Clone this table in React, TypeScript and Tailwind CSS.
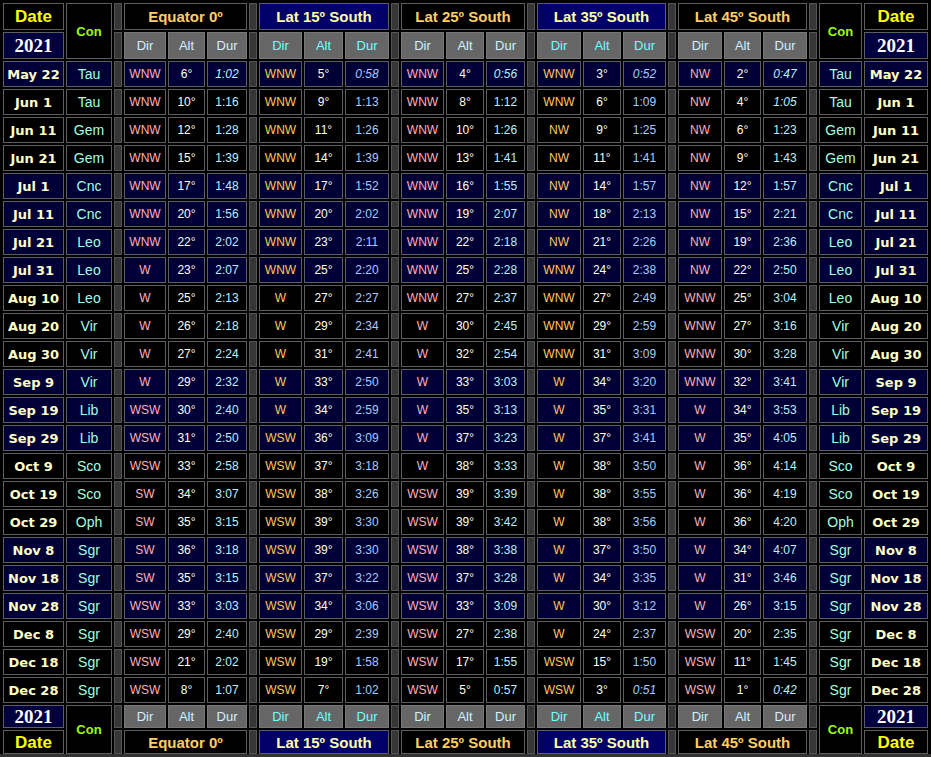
const groups = [
  { name: "Equator 0º", hi: false },
  { name: "Lat 15º South", hi: true },
  { name: "Lat 25º South", hi: false },
  { name: "Lat 35º South", hi: true },
  { name: "Lat 45º South", hi: false },
];

// date, con, then "dir alt dur" per latitude; trailing i = italic duration
const rows: string[][] = [
  ["May 22", "Tau", "WNW 6 1:02i", "WNW 5 0:58i", "WNW 4 0:56i", "WNW 3 0:52i", "NW 2 0:47i"],
  ["Jun 1", "Tau", "WNW 10 1:16", "WNW 9 1:13", "WNW 8 1:12", "WNW 6 1:09", "NW 4 1:05i"],
  ["Jun 11", "Gem", "WNW 12 1:28", "WNW 11 1:26", "WNW 10 1:26", "NW 9 1:25", "NW 6 1:23"],
  ["Jun 21", "Gem", "WNW 15 1:39", "WNW 14 1:39", "WNW 13 1:41", "NW 11 1:41", "NW 9 1:43"],
  ["Jul 1", "Cnc", "WNW 17 1:48", "WNW 17 1:52", "WNW 16 1:55", "NW 14 1:57", "NW 12 1:57"],
  ["Jul 11", "Cnc", "WNW 20 1:56", "WNW 20 2:02", "WNW 19 2:07", "NW 18 2:13", "NW 15 2:21"],
  ["Jul 21", "Leo", "WNW 22 2:02", "WNW 23 2:11", "WNW 22 2:18", "NW 21 2:26", "NW 19 2:36"],
  ["Jul 31", "Leo", "W 23 2:07", "WNW 25 2:20", "WNW 25 2:28", "WNW 24 2:38", "NW 22 2:50"],
  ["Aug 10", "Leo", "W 25 2:13", "W 27 2:27", "WNW 27 2:37", "WNW 27 2:49", "WNW 25 3:04"],
  ["Aug 20", "Vir", "W 26 2:18", "W 29 2:34", "W 30 2:45", "WNW 29 2:59", "WNW 27 3:16"],
  ["Aug 30", "Vir", "W 27 2:24", "W 31 2:41", "W 32 2:54", "WNW 31 3:09", "WNW 30 3:28"],
  ["Sep 9", "Vir", "W 29 2:32", "W 33 2:50", "W 33 3:03", "W 34 3:20", "WNW 32 3:41"],
  ["Sep 19", "Lib", "WSW 30 2:40", "W 34 2:59", "W 35 3:13", "W 35 3:31", "W 34 3:53"],
  ["Sep 29", "Lib", "WSW 31 2:50", "WSW 36 3:09", "W 37 3:23", "W 37 3:41", "W 35 4:05"],
  ["Oct 9", "Sco", "WSW 33 2:58", "WSW 37 3:18", "W 38 3:33", "W 38 3:50", "W 36 4:14"],
  ["Oct 19", "Sco", "SW 34 3:07", "WSW 38 3:26", "WSW 39 3:39", "W 38 3:55", "W 36 4:19"],
  ["Oct 29", "Oph", "SW 35 3:15", "WSW 39 3:30", "WSW 39 3:42", "W 38 3:56", "W 36 4:20"],
  ["Nov 8", "Sgr", "SW 36 3:18", "WSW 39 3:30", "WSW 38 3:38", "W 37 3:50", "W 34 4:07"],
  ["Nov 18", "Sgr", "SW 35 3:15", "WSW 37 3:22", "WSW 37 3:28", "W 34 3:35", "W 31 3:46"],
  ["Nov 28", "Sgr", "WSW 33 3:03", "WSW 34 3:06", "WSW 33 3:09", "W 30 3:12", "W 26 3:15"],
  ["Dec 8", "Sgr", "WSW 29 2:40", "WSW 29 2:39", "WSW 27 2:38", "W 24 2:37", "WSW 20 2:35"],
  ["Dec 18", "Sgr", "WSW 21 2:02", "WSW 19 1:58", "WSW 17 1:55", "WSW 15 1:50", "WSW 11 1:45"],
  ["Dec 28", "Sgr", "WSW 8 1:07", "WSW 7 1:02", "WSW 5 0:57", "WSW 3 0:51i", "WSW 1 0:42i"],
];

const navyMonths = ["May", "Jul", "Sep", "Nov"];

const cell = "flex items-center justify-center border border-solid border-[#5e5e5e] leading-none";
const sans = "font-['Liberation_Sans',Arial,sans-serif]";

function Spacer() {
  return <div className="border border-solid border-[#555] bg-[#363636]" />;
}

function DateHead() {
  return <div className={`${cell} ${sans} bg-black text-[17px] font-bold text-[#ffff00]`}>Date</div>;
}

function YearHead() {
  return (
    <div className={`${cell} bg-[#00003e] font-['Liberation_Serif',serif] text-[19px] font-bold text-white`}>
      2021
    </div>
  );
}

function ConHead() {
  return <div className={`${cell} ${sans} row-span-2 bg-black text-[13px] font-bold text-[#99ff00]`}>Con</div>;
}

function GroupHead({ name, hi }: { name: string; hi: boolean }) {
  return (
    <div
      className={`${cell} ${sans} col-span-3 text-[15px] font-bold ${
        hi ? "bg-[#000068] text-[#ffffa8]" : "bg-black text-[#ffcc66]"
      }`}
    >
      {name}
    </div>
  );
}

function SubHeads({ hi }: { hi: boolean }) {
  const color = hi ? "text-[#70ffff]" : "text-[#d0f0ff]";
  return (
    <>
      {["Dir", "Alt", "Dur"].map((s) => (
        <div key={s} className={`${cell} ${sans} border-[#787878] bg-[#666] text-[13px] ${color}`}>
          {s}
        </div>
      ))}
    </>
  );
}

function GroupHeadRow() {
  return (
    <>
      {groups.map((g) => (
        <>
          <Spacer key={g.name + "s"} />
          <GroupHead key={g.name} name={g.name} hi={g.hi} />
        </>
      ))}
      <Spacer />
    </>
  );
}

function SubHeadRow() {
  return (
    <>
      {groups.map((g) => (
        <>
          <Spacer key={g.name + "s"} />
          <SubHeads key={g.name} hi={g.hi} />
        </>
      ))}
      <Spacer />
    </>
  );
}

function DataRow({ row }: { row: string[] }) {
  const navy = navyMonths.includes(row[0].slice(0, 3));
  const bg = navy ? "bg-[#000036]" : "bg-black";
  return (
    <>
      <div className={`${cell} ${bg} font-['DejaVu_Sans',Verdana,sans-serif] text-[13px] font-bold text-[#ffffc8]`}>
        {row[0]}
      </div>
      <div className={`${cell} ${bg} ${sans} text-[14px] text-[#a0ffe0]`}>{row[1]}</div>
      {row.slice(2).map((obs, gi) => {
        const [dir, alt, dur] = obs.split(" ");
        const italic = dur.endsWith("i");
        const hi = groups[gi].hi;
        return (
          <>
            <Spacer key={gi + "s"} />
            <div key={gi + "d"} className={`${cell} ${bg} ${sans} text-[12px] ${hi ? "text-[#ffc860]" : "text-[#ffb0bc]"}`}>
              {dir}
            </div>
            <div key={gi + "a"} className={`${cell} ${bg} ${sans} text-[12px] text-[#fffff0]`}>
              {alt}°
            </div>
            <div
              key={gi + "u"}
              className={`${cell} ${bg} ${sans} text-[12px] ${italic ? "italic" : ""} ${
                hi ? "text-[#a8ccff]" : "text-[#b8f0ff]"
              }`}
            >
              {italic ? dur.slice(0, -1) : dur}
            </div>
          </>
        );
      })}
      <Spacer />
      <div className={`${cell} ${bg} ${sans} text-[14px] text-[#a0ffe0]`}>{row[1]}</div>
      <div className={`${cell} ${bg} font-['DejaVu_Sans',Verdana,sans-serif] text-[13px] font-bold text-[#ffffc8]`}>
        {row[0]}
      </div>
    </>
  );
}

export default function App() {
  return (
    <div className="min-h-screen w-[931px] bg-[#333]">
      <div className="grid w-[931px] grid-cols-[61px_46px_8px_42px_37px_40px_8px_43px_39px_44px_8px_43px_38px_39px_8px_44px_38px_43px_8px_44px_37px_44px_8px_43px_64px] grid-rows-[27px_27px_repeat(23,26px)_23px_24px] gap-[2px] border border-b-0 border-solid border-black bg-black px-[2px] pt-[2px]">
        {/* top headers */}
        <DateHead />
        <ConHead />
        <GroupHeadRow />
        <ConHead />
        <DateHead />

        <YearHead />
        <SubHeadRow />
        <YearHead />

        {rows.map((r) => (
          <DataRow key={r[0]} row={r} />
        ))}

        {/* bottom headers */}
        <YearHead />
        <ConHead />
        <SubHeadRow />
        <ConHead />
        <YearHead />

        <DateHead />
        <GroupHeadRow />
        <DateHead />
      </div>
    </div>
  );
}
